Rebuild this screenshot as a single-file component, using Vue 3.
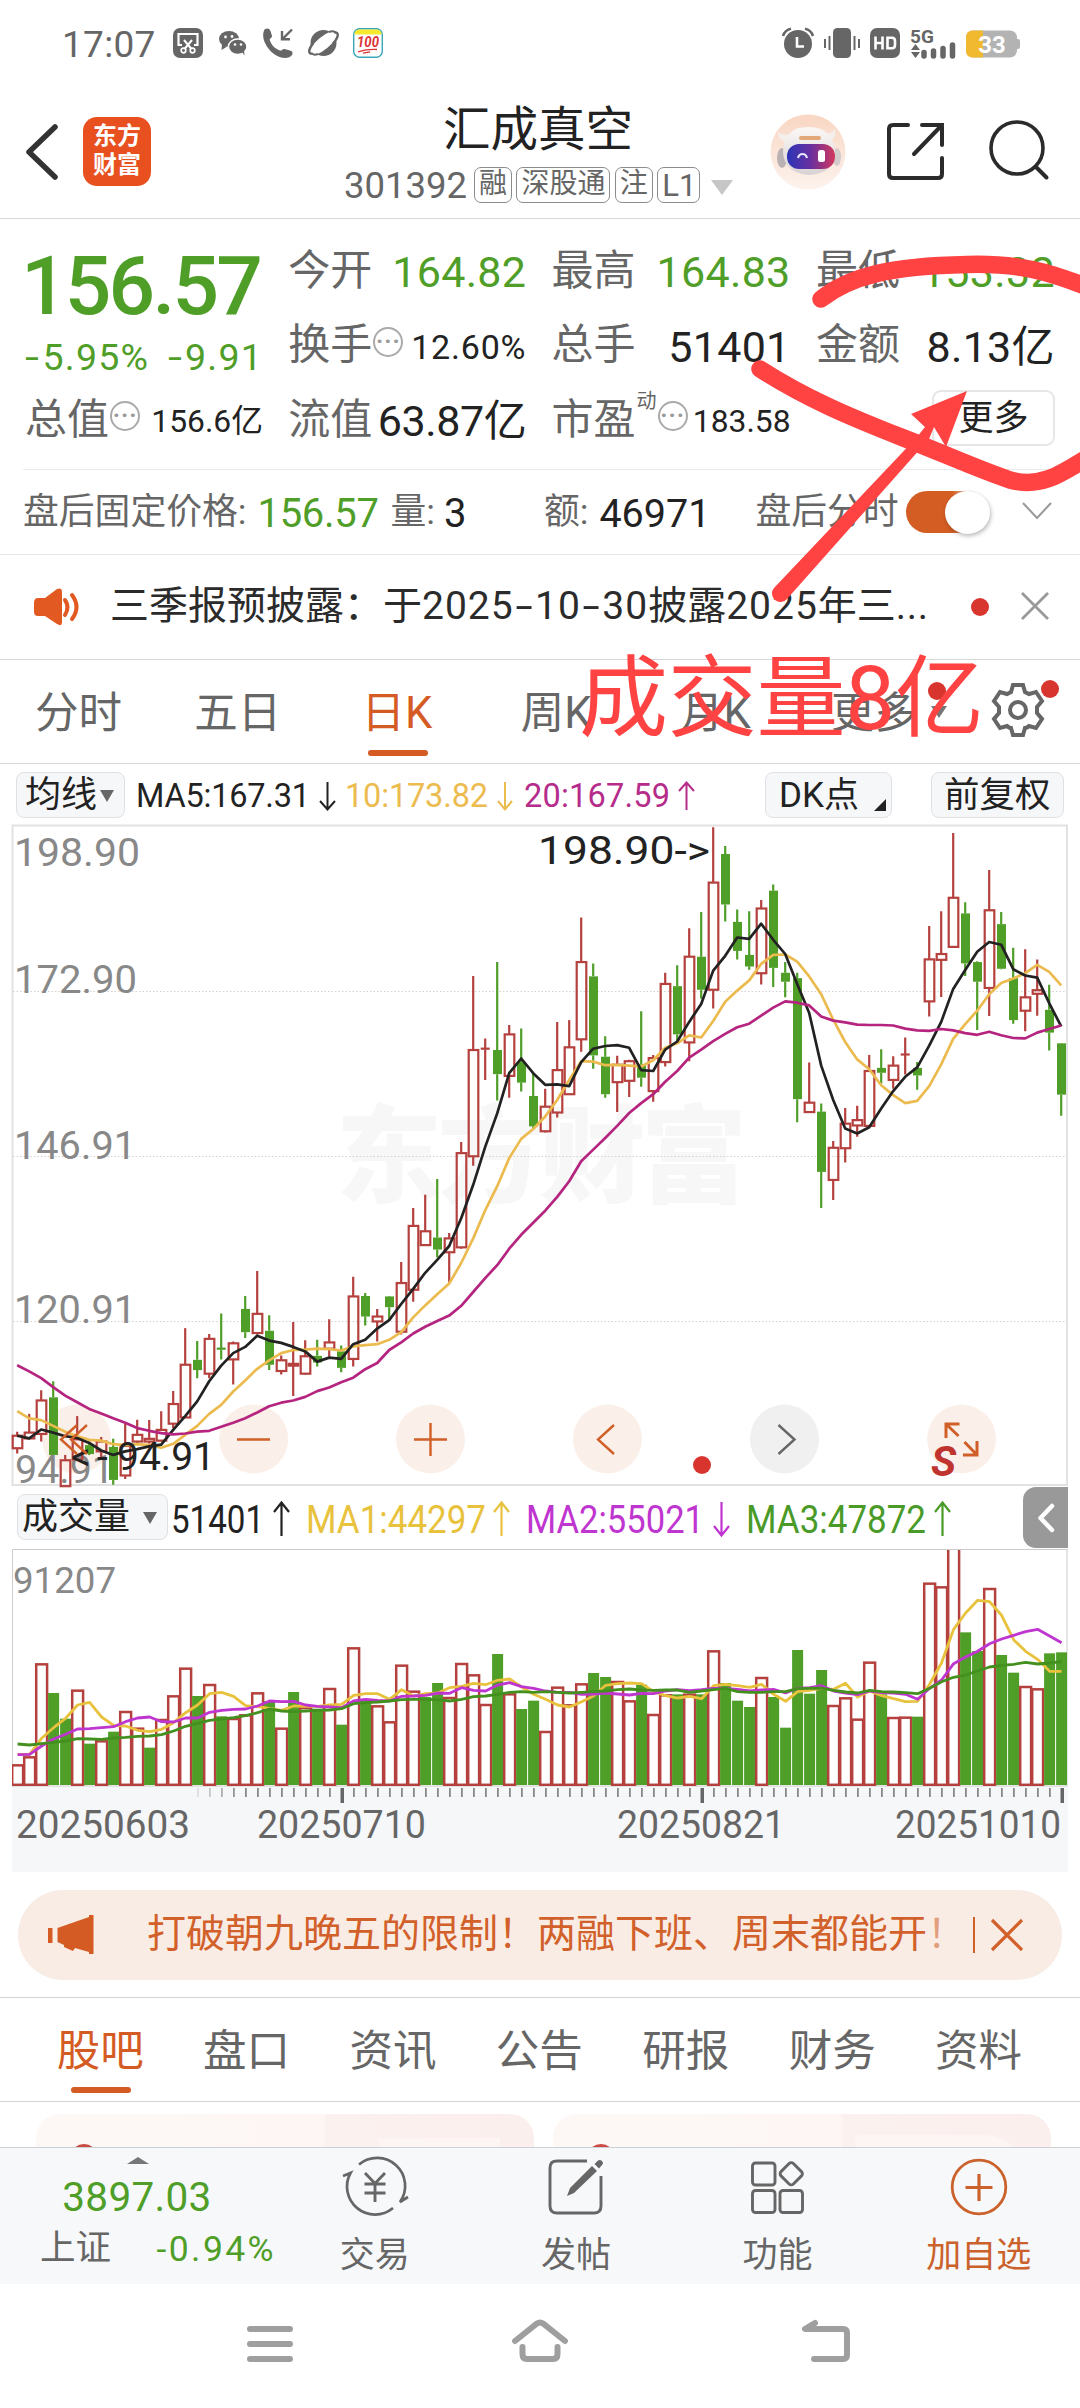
<script setup>
// Daily candles: kind (r = up, g = down), high, body top, body bottom, low, on the plot's own scale
const candleSource = `
r 1368 1377 1405 1417|r 1328 1370 1383 1383|r 1275 1298 1373 1390|g 1255 1291 1420 1420|r 1420 1432 1490 1490
r 1333 1385 1430 1430|g 1390 1398 1418 1420|r 1380 1390 1412 1425|g 1384 1402 1476 1487|r 1350 1400 1466 1474
r 1341 1375 1390 1395|r 1342 1384 1390 1395|r 1322 1364 1388 1390|r 1277 1306 1350 1360|r 1136 1218 1336 1336
g 1165 1207 1230 1248|r 1149 1160 1238 1248|g 1103 1182 1184 1206|r 1166 1170 1206 1262|g 1064 1093 1145 1158
r 1008 1104 1147 1150|g 1107 1142 1218 1230|r 1197 1208 1232 1240|r 1122 1216 1220 1288|r 1163 1199 1238 1240
g 1162 1198 1213 1222|r 1116 1168 1182 1200|g 1175 1188 1225 1235|r 1021 1065 1205 1222|g 1057 1064 1110 1130
r 1093 1110 1121 1166|g 1064 1065 1089 1118|r 988 1035 1144 1150|r 867 907 1050 1077|r 837 919 950 950
g 802 933 960 977|r 923 935 966 1033|r 719 744 955 958|r 347 513 751 772|r 487 510 511 580
g 316 513 567 626|r 457 478 571 620|g 465 540 586 606|g 566 616 684 688|r 600 640 695 698
r 450 558 653 664|r 446 507 612 612|r 216 316 489 517|g 319 348 525 555|g 482 528 612 620
r 526 546 585 652|r 535 538 582 618|g 426 545 575 595|r 524 531 605 629|r 340 365 540 550
g 323 370 478 494|r 240 304 496 538|g 204 304 378 398|r 14 138 378 420|g 56 74 187 225
g 198 226 291 310|g 202 300 326 333|r 177 196 341 366|g 142 156 329 372|g 316 340 360 395
g 340 352 623 675|r 541 631 652 654|g 633 651 786 867|r 717 732 804 849|r 643 678 733 765
r 638 670 682 707|r 524 560 683 683|g 511 553 564 588|r 527 548 580 600|r 485 523 524 568
g 540 553 570 602|r 235 310 404 438|r 202 298 311 394|r 27 172 282 284|g 182 207 319 347
g 314 316 360 468|r 110 200 374 437|g 204 231 331 332|g 284 352 446 454|r 287 395 425 471
r 310 379 387 436|g 367 423 474 514|g 497 498 613 660`

const py = (v) => 820 + v / 2.24
const px = (i) => 17.2 + i * 12
const candles = candleSource.trim().split(/[|\n]/).map((row, i) => {
  const [kind, ...v] = row.split(' ')
  const [high, top, bottom, low] = v.map((n) => py(+n))
  return { kind, x: px(i), high, top, bottom, low, flat: bottom - top < 1.2 }
})

const toLine = (list, x, y) =>
  list.split(/\s+/).map((v, i) => `${x(i).toFixed(1)},${y(+v).toFixed(1)}`).join(' ')

const priceLines = [
  { c: '#ecbb4f', d: '1322 1338 1342 1355 1368 1378 1386 1388 1396 1398 1396 1398 1404 1395 1375 1355 1328 1308 1278 1253 1227 1208 1192 1185 1184 1182 1183 1186 1177 1174 1172 1162 1145 1112 1085 1060 1036 990 935 872 818 755 712 690 662 625 580 538 539 547 546 548 550 536 508 498 480 485 448 405 380 357 320 300 299 315 348 388 445 495 534 556 592 614 632 627 594 545 488 455 425 388 363 353 341 322 338 368' },
  { c: '#222', d: '1377 1383 1363 1370 1378 1382 1393 1410 1420 1412 1407 1401 1397 1364 1333 1300 1255 1220 1192 1178 1153 1164 1169 1178 1188 1211 1202 1205 1172 1162 1137 1118 1082 1048 1012 983 952 890 815 730 655 565 532 565 591 590 594 540 510 504 502 508 558 560 512 494 450 410 335 302 261 264 230 266 298 365 430 548 625 689 700 686 644 605 573 552 503 450 376 334 293 271 277 332 346 351 408 460' },
  { c: '#b5247f', d: '1219 1233 1248 1268 1287 1302 1317 1327 1338 1348 1360 1366 1371 1374 1372 1368 1366 1357 1348 1338 1325 1311 1303 1298 1290 1277 1269 1257 1247 1228 1214 1185 1168 1148 1133 1120 1108 1086 1055 1024 995 958 927 900 873 842 807 762 736 710 683 654 632 612 584 560 530 512 493 477 462 454 436 418 404 407 413 438 447 451 456 457 457 458 465 469 470 466 469 475 479 472 480 486 487 474 466 458' }
].map((l) => ({ c: l.c, points: toLine(l.d, px, py) }))

const volumeTops = '850 826 547 636 713 626 788 778 752 690 740 800 714 643 560 645 609 706 711 700 634 660 740 633 678 683 621 731 499 660 673 721 551 629 648 606 648 546 580 669 519 637 684 659 750 617 670 607 576 588 600 658 611 699 640 640 638 640 508 606 659 678 588 648 740 507 638 567 672 649 713 542 640 708 707 707 305 316 200 454 510 321 522 575 615 622 517 514'
  .split(' ').map(Number)
const vy = (v) => 1480 + v / 3
const vx = (i) => 17.6 + i * 12
const downVolume = new Set([3, 4, 6, 8, 11, 15, 17, 21, 23, 25, 27, 29, 34, 35, 40, 42, 43, 48, 49, 52, 55, 57, 59, 60, 61, 63, 64, 65, 66, 67, 72, 75, 79, 80, 82, 83, 86, 87])
const volumes = volumeTops.map((v, i) => ({ x: vx(i), y: vy(v), down: downVolume.has(i) }))

const volumeLines = [
  { c: '#e8c23d', d: '820 820 772 740 712 672 664 708 733 735 748 752 745 725 695 672 638 634 646 674 677 682 688 675 676 676 672 670 643 638 638 655 626 645 638 636 620 616 607 611 598 594 618 640 655 672 678 662 645 613 608 606 608 632 644 651 646 653 614 610 614 619 610 640 661 632 628 622 625 607 648 630 644 653 662 661 610 545 445 396 358 362 403 476 511 535 571 571' },
  { c: '#bf35d0', d: '821 820 795 774 760 744 743 740 737 722 711 708 722 723 711 711 694 688 685 684 675 660 662 661 672 676 678 680 660 655 658 660 646 645 643 636 637 620 628 630 612 605 617 622 630 634 634 640 639 636 639 642 637 638 630 626 629 626 622 622 625 630 627 625 636 622 620 614 630 636 641 630 635 636 640 655 622 597 548 528 511 488 474 463 452 445 465 485' },
  { c: '#43901f', d: '789 792 788 784 780 773 774 775 771 769 766 765 761 750 736 727 718 714 710 704 695 684 690 692 690 688 687 683 668 665 663 660 656 655 655 656 660 655 647 645 640 634 632 634 632 634 636 634 632 630 626 624 627 628 627 627 634 630 626 622 632 634 634 632 632 623 622 621 628 633 636 628 632 633 635 638 622 602 589 582 570 558 553 550 544 549 546 542' }
].map((l) => ({ c: l.c, points: toLine(l.d, vx, vy) }))

const ticks = Array.from({ length: 73 }, (_, k) => k + 15).map((i) => ({
  x: vx(i) + 0.4,
  major: [27, 57, 87].includes(i),
  opacity: Math.min(1, (i - 14) * 0.22)
}))

const priceLabels = [
  ['198.90', 14, 865, 126], ['172.90', 14, 992, 123], ['146.91', 14, 1157.5, 122],
  ['120.91', 14, 1321.5, 122], ['94.91', 15, 1481.5, 99]
]
const dates = [['20250603', 16, 174], ['20250710', 257, 169], ['20250821', 617, 168], ['20251010', 895, 166]]

const periods = ['分时', '五日', '日K', '周K', '月K', '更多']
const sections = ['股吧', '盘口', '资讯', '公告', '研报', '财务', '资料']
const buttonsX = [76.5, 253.7, 430.5, 607.5, 784.5, 961.6]
</script>

<template>
  <div class="phone">
    <div class="status">
      <span class="time">17:07</span>
      <svg width="30" height="30" viewBox="0 0 30 30"><rect width="30" height="30" rx="7" fill="#666" /><path d="M9 17H5.5V6H24.500V17H21" fill="none" stroke="#fff" stroke-width="2.2" /><path d="M11 12 L18.500 21M19 12 L11.500 21" stroke="#fff" stroke-width="2" /><circle cx="10.500" cy="22.500" r="2.300" fill="none" stroke="#fff" stroke-width="1.700" /><circle cx="19.500" cy="22.500" r="2.300" fill="none" stroke="#fff" stroke-width="1.700" /></svg>
      <svg class="wechat" width="30" height="30" viewBox="0 0 30 30"><ellipse cx="11" cy="11" rx="10" ry="8" fill="#666" /><path d="M4 16l-.5 6 5-3z" fill="#666" /><ellipse cx="19.700" cy="18.800" rx="9.300" ry="7.800" fill="#666" stroke="#fff" stroke-width="1.500" /><path d="M24 24l2.500 3.500-.5-5z" fill="#666" /><g fill="#fff"><circle cx="7.500" cy="9" r="1.400" /><circle cx="14" cy="8.500" r="1.400" /><circle cx="17" cy="16.500" r="1.300" /><circle cx="23" cy="16.500" r="1.300" /></g></svg>
      <svg width="30" height="30" viewBox="0 0 30 30"><path d="M2 1C5 0 6 0 7.500 3L9 8C9 10 6.500 10.500 6.800 12C8 16.500 12 21 17 22.500C19 23 19.500 20.500 21.500 21L27 22.500C30 23.500 30 25 29 27C26 31 18 31 11 26C3 20-3 8 2 1Z" fill="#666" /><path d="M29 1.500L19.500 11M19 3V11.300H27" fill="none" stroke="#666" stroke-width="2.400" /></svg>
      <svg class="planet" width="32" height="30" viewBox="0 0 32 30"><circle cx="15.500" cy="15" r="13" fill="#666" /><ellipse cx="15.500" cy="15" rx="17.500" ry="6.200" transform="rotate(-40 15.500 15)" fill="#fff" /><path d="M26.500 4.500C31.500 4 30.500 9.500 25 15.500M4.500 25.500C-.500 26.500 .500 20.500 5.500 15" fill="none" stroke="#666" stroke-width="2.400" /><path d="M21 4Q25 2.500 27.500 4.500M10 26Q6 27.500 4 25.500" fill="none" stroke="#666" stroke-width="2" /></svg>
      <svg width="30" height="30" viewBox="0 0 30 30"><rect x=".7" y=".7" width="28.600" height="28.600" rx="6" fill="#fff" stroke="#3aa6b8" stroke-width="1.400" /><path d="M1.400 6.500Q1.400 1.400 7 1.400H23Q28.600 1.400 28.600 6.500Z" fill="#f7e92e" /><text x="4" y="19" textLength="22" lengthAdjust="spacingAndGlyphs" class="hundred">100</text><path d="M5 23.800Q14 21 24 21.500M10 25.200L17 23.800" stroke="#d33" stroke-width="1.300" fill="none" /></svg>
      <div class="status-right">
        <svg width="32" height="30" viewBox="0 0 32 30"><circle cx="16" cy="16" r="14" fill="#666" /><path d="M1 8Q3 2 9 .800M31 8Q29 2 23 .800" fill="none" stroke="#666" stroke-width="2.500" /><path d="M15 9V18.500H22" fill="none" stroke="#fff" stroke-width="2.600" /></svg>
        <svg width="36" height="30" viewBox="0 0 36 30"><rect x="9" y="0" width="18" height="30" rx="4.500" fill="#666" /><path d="M1 11V20M5.500 8V22M30.500 8V22M35 11V20" stroke="#666" stroke-width="2" /></svg>
        <svg width="30" height="30" viewBox="0 0 30 30"><rect width="30" height="30" rx="7" fill="#666" /><path d="M5.500 8.500V21.500M5.500 15H12.500M12.500 8.500V21.500M17.500 9.700H22Q25 9.700 25 13V17Q25 20.300 22 20.300H17.500Z" fill="none" stroke="#fff" stroke-width="2.600" /></svg>
        <svg class="signal" width="46" height="30" viewBox="0 0 46 30"><text x="0" y="14.500" class="fiveg">5G</text><path d="M5.500 16L10 22H1ZM5.500 30L1 24H10Z" fill="#666" /><path d="M14 24.500V28M23.500 23V28M33 20.500V28M42.500 17V28" stroke="#666" stroke-width="5.500" stroke-linecap="round" /></svg>
        <svg class="battery" width="56" height="30" viewBox="0 0 56 30"><rect x="0" y="2.500" width="51" height="27" rx="7" fill="#b3b3b3" /><path d="M17 2.500H7Q0 2.500 0 9.500V22.500Q0 29.500 7 29.500H17Z" fill="#f0b92f" /><rect x="49" y="11" width="5" height="10" rx="2" fill="#b3b3b3" /><text x="26" y="24.500" class="pct">33</text></svg>
      </div>
    </div>

    <header class="head">
      <svg class="back" width="34" height="60" viewBox="0 0 34 60"><path d="M30 5L4 30L30 55" fill="none" stroke="#333" stroke-width="5.500" stroke-linecap="round" stroke-linejoin="round" /></svg>
      <div class="logo"><span>东方</span><span>财富</span></div>
      <div class="title">
        <h1>汇成真空</h1>
        <div class="code">
          <span class="num">301392</span><b>融</b><b>深股通</b><b>注</b><b class="l1">L1</b><i></i>
        </div>
      </div>
      <svg class="robot" width="76" height="76" viewBox="0 0 76 76">
        <defs><linearGradient id="face" x1="0" x2="1"><stop offset="0" stop-color="#2b35b8" /><stop offset=".5" stop-color="#6a2f9e" /><stop offset="1" stop-color="#d2385c" /></linearGradient><linearGradient id="halo" x1="0" y1="0" x2="0" y2="1"><stop offset="0" stop-color="#f8d6c2" /><stop offset="1" stop-color="#fdf3ed" /></linearGradient><linearGradient id="helmet" x1="0" y1="0" x2="0" y2="1"><stop offset="0" stop-color="#fbf8f6" /><stop offset="1" stop-color="#d9d2d4" /></linearGradient></defs>
        <circle cx="38" cy="38" r="37.500" fill="url(#halo)" />
        <ellipse cx="12" cy="44" rx="5" ry="10" fill="#b9b1b3" /><ellipse cx="67" cy="43" rx="4" ry="9" fill="#d2cbcb" />
        <path d="M8 18Q7 24 15 28L20 20Q12 22 8 18ZM65 15Q67 22 61 27L55 19Q62 20 65 15Z" fill="#f5efec" />
        <path d="M13 38Q14 13 38 13Q63 13 65 38Q66 59 39 61Q14 59 13 38Z" fill="url(#helmet)" />
        <rect x="29" y="22" width="22" height="4" rx="2" fill="#e2a878" />
        <rect x="17" y="30" width="48" height="25" rx="12" fill="url(#face)" />
        <path d="M28 44Q29 40 32.500 40T37 44" fill="none" stroke="#e4e6ff" stroke-width="2.200" /><rect x="48" y="36" width="7" height="12" rx="2.500" fill="#fff" />
      </svg>
      <svg class="share" width="60" height="60" viewBox="0 0 60 60"><path d="M22 4H7Q3 4 3 8V53Q3 57 7 57H52Q56 57 56 53V37M36 4H56V24M56 4L28 33" fill="none" stroke="#2b2b2b" stroke-width="4" stroke-linecap="round" /></svg>
      <svg class="search" width="62" height="62" viewBox="0 0 62 62"><circle cx="29" cy="28" r="26" fill="none" stroke="#2b2b2b" stroke-width="3.600" /><path d="M48 47L58.500 57.500" stroke="#2b2b2b" stroke-width="4" stroke-linecap="round" /></svg>
    </header>

    <section class="quote">
      <div class="cell first-price"><span class="price">156.57</span></div>
      <div class="cell"><label>今开</label><em class="g">164.82</em></div>
      <div class="cell"><label>最高</label><em class="g">164.83</em></div>
      <div class="cell"><label>最低</label><em class="g">153.32</em></div>
      <div class="cell change"><span><i>-</i>5.95%</span><span><i>-</i>9.91</span></div>
      <div class="cell"><label>换手</label><u class="more-dot">···</u><em class="s wide">12.60%</em></div>
      <div class="cell"><label>总手</label><em>51401</em></div>
      <div class="cell"><label>金额</label><em>8.13亿</em></div>
      <div class="cell total"><label>总值</label><u class="more-dot">···</u><em class="s">156.6亿</em></div>
      <div class="cell"><label>流值</label><em class="m">63.87亿</em></div>
      <div class="cell"><label>市盈</label><sup>动</sup><u class="more-dot pe">···</u><em class="s">183.58</em></div>
      <div class="cell"><button class="more">更多</button></div>
    </section>

    <section class="after">
      <label>盘后固定价格:</label><em class="g">156.57</em>
      <label class="qty">量:</label><em class="q3">3</em>
      <label class="amt">额:</label><em class="a">46971</em>
      <label class="split">盘后分时</label>
      <span class="toggle"><i></i></span>
      <svg class="down" width="30" height="18" viewBox="0 0 30 18"><path d="M1 1L15 16L29 1" fill="none" stroke="#999" stroke-width="2" /></svg>
    </section>

    <section class="notice">
      <svg width="46" height="38" viewBox="0 0 46 38"><path d="M0 15Q0 10 4 10H11L23 1Q28-1 28 4V34Q28 39 23 36L11 28H4Q0 28 0 24Z" fill="#e25a22" /><path d="M31 12Q36 19 31 27M38 7Q47 19 38 31" fill="none" stroke="#e25a22" stroke-width="4" stroke-linecap="round" /></svg>
      <p>三季报预披露：于<span class="dn">2025<i>-</i>10<i>-</i>30</span>披露<span class="dn">2025</span>年三<span class="dots">...</span></p>
      <span class="dot"></span>
      <svg class="x" width="30" height="30" viewBox="0 0 30 30"><path d="M2 2L28 28M28 2L2 28" stroke="#999" stroke-width="2.800" /></svg>
    </section>

    <nav class="periods">
      <a v-for="(p, i) in periods" :key="p" :class="{ on: i === 2, has: i === 5 }">{{ p }}<i v-if="i === 5" class="tri"></i></a>
      <div class="gear">
        <svg width="54" height="54" viewBox="0 0 54 54"><path d="M22 2H32L34 9Q36 10 38 11L45 9L51 18L46 24V30L51 36L45 45L38 43Q36 45 34 45L32 52H22L20 45Q18 45 16 43L9 45L3 36L8 30V24L3 18L9 9L16 11Q18 10 20 9Z" fill="none" stroke="#666" stroke-width="4" /><circle cx="27" cy="27" r="8" fill="none" stroke="#666" stroke-width="4" /></svg>
        <span class="dot"></span>
      </div>
    </nav>

    <section class="strip">
      <button class="chip avg">均线<i></i></button>
      <svg class="legend" width="580" height="46" viewBox="136 771 580 46">
        <g class="ma"><text x="136" y="806" textLength="174" fill="#222">MA5:167.31</text><text x="345" y="806" textLength="143" fill="#ecbb4f">10:173.82</text><text x="524" y="806" textLength="146" fill="#b52c8a">20:167.59</text></g>
        <g fill="none" stroke-width="2"><path d="M327.500 781V808M320 800L327.500 808.500L335 800" stroke="#222" /><path d="M505 781V808M498 800L505 808.500L512 800" stroke="#ecbb4f" /><path d="M686.500 809V782M679 790L686.500 781.500L694 790" stroke="#b52c8a" /></g>
      </svg>
      <button class="chip dk">DK点<i></i></button>
      <button class="chip fq">前复权</button>
    </section>

    <svg class="kline" width="1080" height="662" viewBox="0 823 1080 662">
      <rect x="12.500" y="824.500" width="1054.500" height="659.500" fill="#fff" stroke="#e2e2e2" stroke-width="2" />
      <text x="336" y="1193" textLength="411" class="mark">东方财富</text>
      <path d="M13 990.500H1066M13 1155.500H1066M13 1320.500H1066" stroke="#d2d2d2" stroke-width="1.200" stroke-dasharray="1.500 2" />
      <circle v-for="(c, i) in buttonsX" :key="c" :cx="c" cy="1438" r="34.500" :fill="i === 4 ? '#f0f0f0' : '#fbf0e9'" />
      <text v-for="l in priceLabels" :key="l[0]" :x="l[1]" :y="l[2]" :textLength="l[3]" class="axis" lengthAdjust="spacingAndGlyphs">{{ l[0] }}</text>
      <g v-for="(k, i) in candles" :key="i" :class="k.kind">
        <path :d="`M${k.x} ${k.high}V${k.top}M${k.x} ${k.bottom}V${k.low}`" />
        <path v-if="k.flat" :d="`M${k.x - 4.500} ${k.top}h9`" />
        <rect v-else-if="k.kind === 'r'" :x="k.x - 4.500" :y="k.top" width="9.600" :height="k.bottom - k.top" />
        <rect v-else class="solid" :x="k.x - 4.200" :y="k.top" width="9" :height="k.bottom - k.top" />
      </g>
      <polyline v-for="l in priceLines" :key="l.c" :points="l.points" :stroke="l.c" fill="none" stroke-width="2.700" stroke-linejoin="round" />
      <text x="538" y="863" textLength="172" class="peak" lengthAdjust="spacingAndGlyphs">198.90-&gt;</text>
      <text y="1468.500" class="peak"><tspan x="71">&lt;</tspan><tspan x="97">-</tspan><tspan x="117" textLength="98">94.91</tspan></text>
      <g fill="none" stroke="#d05f28" stroke-width="2.400">
        <path d="M77 1424L61 1438.500L77 1453M87 1424L71 1438.500L87 1453M237 1438.500H270M414 1438.500H447M430.500 1422V1455M614 1424L598 1438.500L614 1453" />
        <path d="M959.500 1423H946V1437M946 1423L958.500 1435M963 1454H977V1440M977 1454L964.500 1441" stroke-width="3" />
        <path d="M778.500 1424L794.500 1438.500L778.500 1453" stroke="#666" />
      </g>
      <circle cx="702" cy="1464" r="9" fill="#d8352f" />
      <text x="931" y="1474.500" class="sell">S</text>
    </svg>

    <section class="vol-head">
      <button class="chip vol">成交量<i></i></button>
      <svg class="legend" width="790" height="46" viewBox="170 1493 790 46">
        <g class="vma">
          <text x="171" y="1531.500" textLength="93" lengthAdjust="spacingAndGlyphs" fill="#222">51401</text>
          <text x="306" y="1531.500" textLength="180" lengthAdjust="spacingAndGlyphs" fill="#e8c23d">MA1:44297</text>
          <text x="526" y="1531.500" textLength="178" lengthAdjust="spacingAndGlyphs" fill="#bf35d0">MA2:55021</text>
          <text x="746" y="1531.500" textLength="180" lengthAdjust="spacingAndGlyphs" fill="#4a9a28">MA3:47872</text>
        </g>
        <g fill="none" stroke-width="2.200"><path d="M281.500 1535V1502M274 1511L281.500 1501.500L289 1511" stroke="#222" /><path d="M501.500 1535V1502M494 1511L501.500 1501.500L509 1511" stroke="#e8c23d" /><path d="M721.500 1501V1534M714 1525L721.500 1534.500L729 1525" stroke="#bf35d0" /><path d="M942.500 1535V1502M935 1511L942.500 1501.500L950 1511" stroke="#4a9a28" /></g>
      </svg>
      <div class="drawer"><svg width="18" height="30" viewBox="0 0 18 30"><path d="M15 3L3.500 15L15 27" fill="none" stroke="#fff" stroke-width="4.500" stroke-linecap="round" stroke-linejoin="round" /></svg></div>
    </section>

    <svg class="volume" width="1080" height="323" viewBox="0 1548 1080 323">
      <clipPath id="plot"><rect x="12" y="1549" width="1055" height="236" /></clipPath>
      <rect x="12" y="1785" width="1056" height="86" fill="#f6f7f9" />
      <rect x="12.500" y="1548.500" width="1054.500" height="236.500" fill="#fff" stroke="#ccc" />
      <g clip-path="url(#plot)">
        <template v-for="(b, i) in volumes" :key="i">
          <rect v-if="b.down" :x="b.x - 5.500" :y="b.y" width="11" :height="1784 - b.y" fill="#4f9e28" />
          <rect v-else :x="b.x - 5.400" :y="b.y + 1" width="10.900" :height="1782.800 - b.y" fill="#fff" stroke="#b5413e" stroke-width="2.500" />
        </template>
        <polyline v-for="l in volumeLines" :key="l.c" :points="l.points" :stroke="l.c" fill="none" stroke-width="2.800" stroke-linejoin="round" />
      </g>
      <text x="13" y="1592" textLength="103" class="vaxis" lengthAdjust="spacingAndGlyphs">91207</text>
      <rect v-for="t in ticks" :key="t.x" :x="t.x - (t.major ? 1.500 : 1)" y="1787" :width="t.major ? 3.500 : 1.800" :height="t.major ? 15 : 9" :opacity="t.opacity" :fill="t.major ? '#666' : '#888'" />
      <text v-for="d in dates" :key="d[0]" :x="d[1]" y="1837" :textLength="d[2]" class="date" lengthAdjust="spacingAndGlyphs">{{ d[0] }}</text>
    </svg>

    <section class="banner">
      <svg width="46" height="40" viewBox="0 0 46 40"><path d="M0 13H4.500V28H0ZM9.500 13L41 2V0H45.500V39H41V37L27 33L25 36L16 32V30L9.500 27Z" fill="#d55b25" /></svg>
      <p>打破朝九晚五的限制！两融下班、周末都能开<span>！</span></p>
      <i></i>
      <svg class="bx" width="34" height="34" viewBox="0 0 34 34"><path d="M2 2L32 32M32 2L2 32" stroke="#d2602a" stroke-width="3.200" /></svg>
    </section>

    <nav class="sections"><a v-for="(s, i) in sections" :key="s" :class="{ on: i === 0 }">{{ s }}</a></nav>

    <section class="cards">
      <div class="card"><i></i><b></b></div>
      <div class="card second"><i></i><b></b></div>
    </section>

    <footer class="bar">
      <div class="index">
        <i class="up"></i>
        <span class="pts">3897.03</span>
        <div class="idx"><span>上证</span><em>-0.94%</em></div>
      </div>
      <div class="act">
        <svg width="66" height="60" viewBox="0 0 66 60"><path d="M17 7.500A28 28 0 0 1 58 45L66 40M51 51A28 28 0 0 1 8.500 16L1 19" fill="none" stroke="#666" stroke-width="2.700" /><path d="M23 16L33 26.500L43 16M33 26.500V45M22.500 27H43.500M22.500 36H43.500" fill="none" stroke="#666" stroke-width="2.900" /></svg>
        <span>交易</span>
      </div>
      <div class="act">
        <svg width="56" height="60" viewBox="0 0 56 60"><path d="M39 4H9Q2 4 2 11V49Q2 56 9 56H46Q53 56 53 49V19" fill="none" stroke="#666" stroke-width="2.900" /><path d="M19 39L22 31L44 9L49 14L26 36Z" fill="#666" /><path d="M46.500 7L50 3.500Q53 2 55 5.500Q55 7 54 8L51 11.500Z" fill="#666" /></svg>
        <span>发帖</span>
      </div>
      <div class="act">
        <svg width="56" height="60" viewBox="0 0 56 60"><g fill="none" stroke="#666" stroke-width="2.900"><rect x="3.500" y="6" width="22.500" height="22" rx="3" /><rect x="3.500" y="33.500" width="22.500" height="22" rx="3" /><rect x="31" y="33.500" width="22.500" height="22" rx="3" /><rect x="33.500" y="8" width="17.500" height="17.500" rx="3" transform="rotate(45 42.250 16.750)" /></g></svg>
        <span>功能</span>
      </div>
      <div class="act hot">
        <svg width="60" height="60" viewBox="0 0 60 60"><circle cx="30" cy="30" r="26.800" fill="none" stroke="#cb622c" stroke-width="2.800" /><path d="M30 17V44M16.500 30.500H43.500" stroke="#cb622c" stroke-width="3.200" /></svg>
        <span>加自选</span>
      </div>
    </footer>

    <div class="sysnav">
      <svg width="46" height="46" viewBox="0 0 46 46"><path d="M3 8H43M3 23H43M3 38H43" stroke="#9f9f9f" stroke-width="6" stroke-linecap="round" /></svg>
      <svg class="home" width="60" height="46" viewBox="0 0 60 46"><path d="M5 20L27 2.500Q30 .500 33 2.500L55 20M12.500 26V33Q12.500 38 17 38H43Q47.500 38 47.500 33V26" fill="none" stroke="#9f9f9f" stroke-width="6" stroke-linecap="round" /></svg>
      <svg width="50" height="46" viewBox="0 0 50 46"><path d="M14 2L4 8H42Q46 8 46 12V34Q46 38 42 38H13" fill="none" stroke="#9f9f9f" stroke-width="6" stroke-linecap="round" stroke-linejoin="round" /></svg>
    </div>

    <svg class="ink" width="1080" height="800" viewBox="0 0 1080 800">
      <g fill="none" stroke="#ff4242" stroke-width="17.500" stroke-linecap="round">
        <path d="M821 299C850 276 890 266 967 264.500C1020 263 1050 272 1090 288" />
        <path d="M760 369C805 398 850 417 901 437C950 456 975 468 1010 480C1040 488 1058 476 1090 456" />
      </g>
      <path d="M967 391L911 414L925 427L917 437L774 588A8 8 0 0 0 787 599L929 439L934 427L946 447Z" fill="#ff4242" />
      <text x="579" y="729" textLength="405" class="scrawl">成交量8亿</text>
    </svg>
  </div>
</template>

<style>
body { margin: 0; background: #fff; }
</style>

<style scoped>
.phone { position: relative; width: 1080px; height: 2408px; overflow: hidden; background: #fff; color: #222; font-family: Roboto, "Noto Sans CJK SC", sans-serif; line-height: 1; display: flex; flex-direction: column; }
.phone > * { flex: none; box-sizing: border-box; }
svg { display: block; flex: none; overflow: visible; }
em, i, u { font-style: normal; text-decoration: none; }
button { font: inherit; margin: 0; padding: 0; color: #222; }
a, label, p, span { white-space: nowrap; }

.status { height: 85px; padding: 0 60px 0 62px; display: flex; align-items: center; gap: 15px; }
.time { width: 96px; font-size: 37px; color: #666; letter-spacing: .3px; margin-top: 3px; }
.planet { margin-right: -2px; }
.hundred { font: italic bold 14px Roboto, sans-serif; fill: #d33; }
.fiveg { font: bold 19px Roboto, sans-serif; fill: #666; }
.pct { font: bold 24px Roboto, sans-serif; fill: #fff; text-anchor: middle; }
.status-right { margin-left: auto; display: flex; align-items: center; gap: 10px; }
.battery { margin: 0 -2px 0 0; }

.head { height: 134px; border-bottom: 1px solid #d8d8d8; position: relative; display: flex; align-items: flex-start; }
.back { margin: 37px 0 0 25px; }
.logo { width: 68px; height: 69px; margin: 32px 0 0 24px; border-radius: 14px; background: #e8501f; color: #fff; font-weight: 700; font-size: 24px; line-height: 29px; display: flex; flex-direction: column; align-items: center; padding-top: 5px; box-sizing: border-box; }
.title { margin-left: 193px; width: 401px; padding-top: 20px; }
h1 { margin: 0; padding-left: 99px; font-size: 47.500px; font-weight: 400; line-height: 50px; }
.code { height: 36px; margin-top: 12px; display: flex; align-items: center; color: #666; }
.code .num { font-size: 36.500px; width: 130px; margin-top: 3px; }
.code b { height: 34px; line-height: 32px; padding: 0 4px; margin-right: 4.400px; border: 1.500px solid #8c8c8c; border-radius: 7px; font-weight: 400; font-size: 28px; }
.code .l1 { font-size: 31px; line-height: 36px; padding: 0 3px 0 4px; }
.code i { margin: 4px 0 0 6px; border: 11px solid transparent; border-top: 15px solid #c6c6c6; border-bottom: 0; }
.robot { margin: 28.500px 0 0 25px; }
.share { margin: 35.500px 0 0 40px; }
.search { margin: 35px 0 0 42px; }

.quote { height: 250px; padding: 15px 25px 0 25px; display: grid; grid-template-columns: 238px 238px 239px 239px; column-gap: 25.300px; grid-template-rows: repeat(3, 74.600px); justify-content: start; }
.cell { display: flex; align-items: center; min-width: 0; position: relative; }
.cell label { font-size: 42px; color: #666; line-height: 60px; margin-top: -1px; }
.cell em { margin-left: auto; font-size: 43px; margin-top: 3px; letter-spacing: .3px; }
.cell em.m { letter-spacing: -.4px; }
.cell em.s { font-size: 31.800px; letter-spacing: 0; }
.cell em.wide { font-size: 34px; letter-spacing: .8px; }
.quote .g, .after .g { color: #4f9e28; }
.price { font-weight: 500; font-size: 82px; color: #4f9e28; letter-spacing: -2.800px; margin: 30px 0 0 -4px; line-height: 82px; }
.change { color: #4f9e28; font-size: 37.500px; justify-content: space-between; padding-top: 24px; box-sizing: border-box; letter-spacing: 1.200px; }
.change i { display: inline-block; transform: scaleX(1.350); transform-origin: 0 50%; margin-right: 6px; }
.more-dot { width: 26px; height: 26px; border: 2px solid #aaa; border-radius: 50%; font-size: 24px; letter-spacing: 1px; line-height: 25px; color: #999; display: flex; justify-content: center; margin: -8px 0 0 1px; font-weight: 700; flex: none; }
.cell sup { font-size: 20px; color: #666; align-self: flex-start; margin: 6px 0 0 1px; line-height: 24px; }
.pe { margin-left: 1px; }
.more { margin: -5px 0 0 auto; width: 123px; height: 56px; border: 2px solid #e6e6e6; border-radius: 9px; background: #fff; font-size: 35px; line-height: 53px; }

.after { height: 85px; margin-left: 23px; border-top: 1px solid #eaeaea; display: flex; align-items: center; }
.after label { font-size: 35.800px; color: #666; line-height: 52px; margin-top: -1px; }
.after em { font-size: 40px; margin-top: 4px; }
.after .g { margin-left: 11px; width: 122px; letter-spacing: -.3px; }
.qty { margin-left: 11px; }
.after .q3 { margin-left: 9px; width: 22px; }
.amt { margin-left: 78px; }
.after .a { margin-left: 11px; font-size: 39.500px; width: 114px; }
.split { margin-left: 42px; width: 150px; }
.toggle { width: 84px; height: 42px; border-radius: 21px; background: linear-gradient(90deg, #d45d23 55%, #fff 85%); display: flex; justify-content: flex-end; align-items: center; margin-left: 1px; }
.toggle i { width: 45px; height: 43px; border-radius: 50%; background: #fff; box-shadow: 1px 2px 4px rgba(0, 0, 0, .28); }
.down { margin: -2px 0 0 32px; }

.notice { height: 106px; border-top: 1px solid #e8e8e8; border-bottom: 1px solid #d8d8d8; display: flex; align-items: center; padding-left: 34px; }
.notice p { margin: -2px 0 0 30px; width: 861px; font-size: 39px; line-height: 60px; color: #2b2b2b; }
.dn { letter-spacing: 1px; }
.dn i { display: inline-block; transform: scaleX(1.600); margin: 0 4.800px; }
.dots { letter-spacing: .6px; }
.dot { width: 18px; height: 18px; border-radius: 50%; background: #d8352f; }
.x { margin: -2px 0 0 31px; }

.periods { height: 104px; border-bottom: 1px solid #d8d8d8; display: flex; align-items: center; padding-right: 1px; }
.periods a { width: 159.200px; height: 103px; line-height: 107px; text-align: center; font-size: 43.500px; color: #666; position: relative; left: -1px; }
.periods a.on, .sections a.on { color: #d55b25; }
.periods a.on::after { content: ""; position: absolute; left: 51px; bottom: 7px; width: 60px; height: 6px; border-radius: 3px; background: #d55b25; }
.periods a.has::after { content: ""; position: absolute; left: 133px; top: 22px; width: 18px; height: 18px; border-radius: 50%; background: #d8352f; }
.tri { position: absolute; left: 136px; top: 46px; border: 8px solid transparent; border-top: 12px solid #777; border-bottom: 0; }
.gear { position: relative; margin: -3px 0 0 36px; }
.gear .dot { position: absolute; left: 50px; top: -3px; }

.strip { height: 60px; padding-left: 16px; display: flex; align-items: flex-start; padding-top: 8px; }
.chip { height: 46px; border: 1.500px solid #dfe1e5; border-radius: 8px; background: #f6f7f9; font-size: 36px; line-height: 43px; display: flex; align-items: center; box-sizing: border-box; white-space: nowrap; }
.avg { width: 109px; padding-left: 8px; }
.avg i, .vol i { margin: 1px 0 0 3px; border: 7.500px solid transparent; border-top: 12px solid #666; border-bottom: 0; }
.strip .legend { margin-left: 11px; }
.ma text { font-size: 32.500px; }
.dk { width: 127px; margin-left: 49px; font-size: 35px; padding-left: 13px; position: relative; }
.dk i { position: absolute; right: 5px; bottom: 6px; border-left: 12px solid transparent; border-bottom: 12px solid #222; }
.fq { width: 133px; margin-left: 39px; padding-left: 12px; font-size: 35.500px; }

.kline .r path, .kline .r rect { stroke: #b5413e; stroke-width: 2.200; fill: none; }
.kline .g path { stroke: #4f9e28; stroke-width: 2.200; }
.kline .solid { fill: #4f9e28; }
.axis { font-size: 39px; fill: #888; }
.peak { font-size: 39px; fill: #222; }
.mark { font: 900 106px "Noto Sans CJK SC", sans-serif; fill: #f7f7f7; }
.sell { font: italic 700 42px Roboto, sans-serif; fill: #c0342f; }

.vol-head { height: 63px; padding: 1px 12px 0 17px; display: flex; align-items: flex-start; }
.vol { margin-top: 7px; width: 151px; padding-left: 4px; }
.vol i { margin-left: 13px; }
.vol-head .legend { margin: 7px 0 0 2px; }
.vma text { font-size: 39px; }
.drawer { margin-left: auto; width: 45px; height: 61px; background: #999; border-radius: 13px 0 0 13px; display: flex; align-items: center; justify-content: center; }
.vaxis { font-size: 37px; fill: #888; }
.date { font-size: 38px; fill: #666; }

.banner { height: 90px; margin: 18px 18px 17px; border-radius: 45px; background: #f9ece4; display: flex; align-items: center; padding-left: 30px; }
.banner p { margin: -2px 0 0 53px; width: 826px; font-size: 39px; line-height: 60px; color: #d2602a; overflow: hidden; }
.banner p span { opacity: .55; }
.banner i { width: 1.500px; height: 36px; background: #d2602a; }
.bx { margin-left: 15px; }

.sections { height: 105px; border-top: 1px solid #d4d4d4; border-bottom: 1px solid #d4d4d4; display: flex; padding-left: 27px; }
.sections a { width: 146.400px; text-align: center; line-height: 107px; font-size: 43.500px; color: #666; position: relative; height: 103px; }
.sections a.on::after { content: ""; position: absolute; left: 44px; bottom: 8px; width: 60px; height: 6px; border-radius: 3px; background: #d55b25; }

.cards { height: 45px; padding: 12px 0 0 36px; display: flex; gap: 19px; overflow: hidden; }
.card { width: 498px; height: 80px; border-radius: 24px; background: linear-gradient(90deg, #fdf8f6, #fdf6f4 58%, #fbf1ef 58%, #fbefee); position: relative; overflow: hidden; }
.card i { position: absolute; left: 34px; top: 30px; width: 28px; height: 28px; border-radius: 50%; background: #cc4a44; }
.card b { position: absolute; left: 342px; top: 24px; width: 122px; height: 40px; background: #fcf5f3; }
.second b { left: 302px; top: 21px; width: 170px; border-radius: 0 60px 0 0; }

.bar { height: 137px; background: #f7f8fa; border-top: 1px solid #ccd0d4; display: flex; }
.index { width: 274px; position: relative; display: flex; flex-direction: column; align-items: center; }
.up { margin: 9px 0 0 2px; border: 11px solid transparent; border-bottom: 7px solid #777; border-top: 0; }
.pts { font-size: 40.500px; color: #4f9e28; line-height: 48px; margin-top: 9px; letter-spacing: .3px; }
.idx { width: 234px; margin: 1px 0 0 40px; display: flex; align-items: center; justify-content: space-between; font-size: 35.500px; color: #666; line-height: 50px; }
.idx em { color: #4f9e28; font-size: 35.500px; letter-spacing: 2.400px; margin: 2px -2px 0 0; }
.act { width: 201.400px; display: flex; flex-direction: column; align-items: center; padding-top: 9px; color: #666; }
.act span { font-size: 35px; line-height: 50px; margin-top: 14px; }
.hot { color: #cb622c; }

.sysnav { height: 125px; display: flex; padding: 37px 0 0 246.500px; }
.sysnav .home { margin: 0 231px 0 217.500px; }
.ink { position: absolute; left: 0; top: 0; pointer-events: none; }
.scrawl { font-size: 89px; fill: #ff4242; }
</style>
